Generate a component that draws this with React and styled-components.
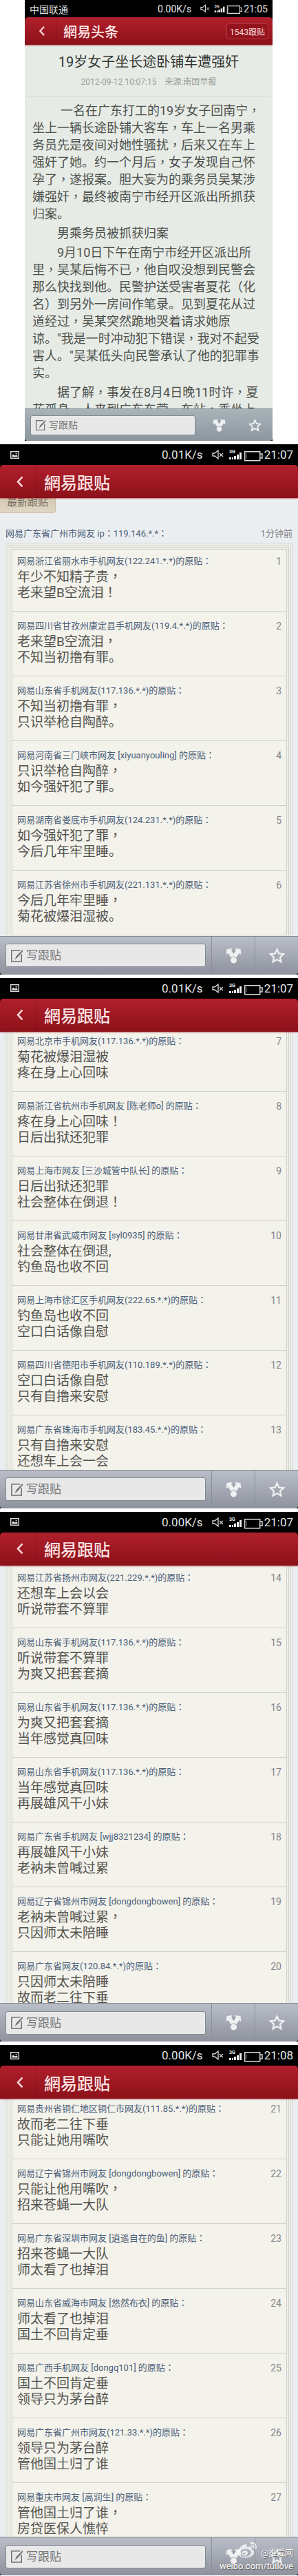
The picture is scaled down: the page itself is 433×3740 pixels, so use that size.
import React from "react";
import styled, { createGlobalStyle, ThemeProvider } from "styled-components";
import { FaWeibo } from "react-icons/fa";

const GlobalStyle = createGlobalStyle`
  * {
    box-sizing: border-box;
  }
  body {
    margin: 0;
    background: #fff;
    font-family: Roboto, "Noto Sans CJK SC", sans-serif;
  }
  h1, h2, p, ol {
    margin: 0;
    padding: 0;
    font-weight: 400;
  }
  button, input {
    font-family: inherit;
  }
`;

const regular = {
  status: 30,
  statusText: 17,
  icons: 74,
  header: 48,
  back: 54,
  logo: 24,
  footer: 56,
  tool: 63,
  field: 34,
  fieldText: 17,
  penIcon: 19,
  toolIcon: 23,
  line: "#8a8f9b",
  paper: "#ebeef1",
  bar: "linear-gradient(#b9bec8, #8e929c)",
};

const compact = {
  status: 25,
  statusText: 14,
  icons: 61,
  header: 40,
  back: 46,
  logo: 20,
  footer: 47,
  tool: 52,
  field: 29,
  fieldText: 14,
  penIcon: 16,
  toolIcon: 19,
  line: "transparent",
  paper: "#e7ebe6",
  bar: "linear-gradient(#a9b3ba, #8c969e)",
};

const Page = styled.main`
  display: flex;
  flex-direction: column;
  gap: 5px;
  position: relative;
`;
const Inset = styled.div`
  padding: 0 37px 0 36px;
`;
const Screen = styled.section`
  display: flex;
  flex-direction: column;
  aspect-ratio: 9 / 16;
  overflow: hidden;
  background: #000;
`;
const Status = styled.div`
  display: flex;
  align-items: center;
  flex: none;
  height: ${(p) => p.theme.status}px;
  padding: 0 7px;
  color: #e4e4e4;
  font-size: ${(p) => p.theme.statusText}px;
  .left {
    flex: 1;
    display: flex;
  }
  .picture {
    margin-left: 8px;
  }
  .icons {
    margin: 0 2px 0 13px;
  }
`;
const Header = styled.header`
  display: flex;
  align-items: center;
  flex: none;
  height: ${(p) => p.theme.header}px;
  border-radius: 5px 5px 0 0;
  background: linear-gradient(#b0202c, #8c1119);
  box-shadow: 0 1px 2px rgba(150, 20, 30, 0.6);
  position: relative;
  z-index: 1;
`;
const Back = styled.button`
  display: flex;
  align-items: center;
  justify-content: center;
  width: ${(p) => p.theme.back}px;
  height: 100%;
  padding: 0 0 0 4px;
  border: 0;
  border-right: 1px solid rgba(100, 5, 15, 0.3);
  background: none;
`;
const Logo = styled.h1`
  flex: 1;
  padding-left: 10px;
  color: #fbe3e3;
  font-size: ${(p) => p.theme.logo}px;
  font-weight: 500;
`;
const Badge = styled.button`
  height: 23px;
  margin-right: 6px;
  padding: 0 4px;
  border: 1px solid #b5333d;
  border-radius: 3px;
  background: #94141d;
  color: #f7dede;
  font-size: 12px;
  white-space: nowrap;
`;
const Body = styled.div`
  flex: 1;
  min-height: 0;
  overflow: hidden;
  background: ${(p) => p.theme.paper};
`;
/* how far the thread has been scrolled under the header */
const Scrolled = styled.div`
  margin-top: -${(p) => p.$by}px;
`;
const Footer = styled.footer`
  display: flex;
  align-items: center;
  flex: none;
  height: ${(p) => p.theme.footer}px;
  border-top: 1px solid #868b90;
  border-radius: 0 0 4px 4px;
  background: ${(p) => p.theme.bar};
`;
const Field = styled.label`
  display: flex;
  align-items: center;
  flex: 1;
  min-width: 0;
  gap: 4px;
  height: ${(p) => p.theme.field}px;
  margin: 0 8px;
  padding: 0 6px;
  border: 1px solid #858a92;
  border-radius: 3px;
  background: #e8e8e8;
  svg {
    flex: none;
  }
  input {
    flex: 1;
    min-width: 0;
    padding: 0;
    border: 0;
    outline: 0;
    background: none;
    font-size: ${(p) => p.theme.fieldText}px;
  }
  input::placeholder {
    color: #777;
    opacity: 1;
  }
`;
const Tool = styled.button`
  display: flex;
  align-items: center;
  justify-content: center;
  width: ${(p) => p.theme.tool}px;
  height: 100%;
  padding: 0;
  border: 0;
  border-left: 1px solid ${(p) => p.theme.line};
  background: none;
`;

const ArticleHead = styled.div`
  margin: 0 4px;
  padding: 11px 0;
  border-bottom: 1px solid #cfd3ce;
  text-align: center;
  h2 {
    color: #333733;
    font-size: 20px;
    line-height: 28px;
  }
  p {
    display: flex;
    justify-content: center;
    gap: 12px;
    margin-top: 6px;
    color: #999d98;
    font-size: 12px;
    line-height: 18px;
  }
`;
const Article = styled.article`
  padding: 8px 14px 0 11px;
  color: #4d514c;
  font-size: 18px;
  line-height: 25px;
  p {
    margin-bottom: 3px;
    text-indent: 36px;
  }
  p:first-child {
    text-indent: 41px;
  }
`;
/* the TC face sets these marks in the middle of their cell */
const Mark = styled.span`
  font-family: Roboto, "Noto Sans CJK TC", sans-serif;
`;

const Tab = styled.div`
  width: 81px;
  height: 32px;
  padding-left: 10px;
  border: 1px solid #c9bda6;
  border-width: 0 1px 1px 0;
  border-radius: 0 0 4px 0;
  background: linear-gradient(#cfc3ac, #e0d6c4);
  color: #7a6f60;
  font-size: 15px;
  line-height: 32px;
`;
const Poster = styled.div`
  display: flex;
  justify-content: space-between;
  margin: 21px 8px 13px;
  color: #4b6079;
  font-size: 13px;
  line-height: 18px;
  time {
    color: #7d8084;
  }
`;
const Thread = styled.ol`
  margin: 0 16px 0 17px;
  border: 1px solid #d0d1ca;
  border-width: ${(p) => (p.$top ? "1px" : "0")} 1px 0;
  background: #f3f2eb;
  box-shadow: 0 0 0 2px #f0f0ea, 0 0 0 3px #d0d1ca, 0 0 0 5px #f0f0ea,
    0 0 0 6px #d3d4ce, 0 0 0 8px #eeefea, 0 0 0 9px #d6d8d4;
  list-style: none;
`;
const Post = styled.li`
  padding: ${(p) => (p.$first ? 8 : 12)}px 7px 15px;
  border-bottom: 1px solid #d0d1ca;
  .meta {
    display: flex;
    justify-content: space-between;
    color: #4b6079;
    font-size: 13px;
    line-height: 18px;
    white-space: nowrap;
  }
  .floor {
    color: #85868a;
    font-size: 14px;
  }
  .text {
    margin-top: 2px;
    color: #53534f;
    font-size: 19px;
    line-height: 23px;
    white-space: pre-line;
  }
`;
const Watermark = styled.div`
  position: absolute;
  right: 7px;
  bottom: 5px;
  display: flex;
  flex-direction: column;
  align-items: flex-end;
  color: #fff;
  font-size: 13px;
  line-height: 17px;
  text-shadow: 1px 1px 1px #555;
  div {
    display: flex;
    align-items: center;
    gap: 6px;
    font-size: 12px;
  }
  svg {
    margin-top: -8px;
    opacity: 0.75;
  }
`;

const screens = [
  {
    speed: "0.01K/s",
    time: "21:07",
    scroll: 10,
    first: 1,
    posts: [
      ["网易浙江省丽水市手机网友(122.241.*.*)的原贴：", "年少不知精子贵，\n老来望B空流泪！"],
      ["网易四川省甘孜州康定县手机网友(119.4.*.*)的原贴：", "老来望B空流泪，\n不知当初撸有罪。"],
      ["网易山东省手机网友(117.136.*.*)的原贴：", "不知当初撸有罪，\n只识举枪自陶醉。"],
      ["网易河南省三门峡市网友 [xiyuanyouling] 的原贴：", "只识举枪自陶醉，\n如今强奸犯了罪。"],
      ["网易湖南省娄底市手机网友(124.231.*.*)的原贴：", "如今强奸犯了罪，\n今后几年牢里睡。"],
      ["网易江苏省徐州市手机网友(221.131.*.*)的原贴：", "今后几年牢里睡，\n菊花被爆泪湿被。"],
    ],
  },
  {
    speed: "0.01K/s",
    time: "21:07",
    scroll: 7,
    first: 7,
    posts: [
      ["网易北京市手机网友(117.136.*.*)的原贴：", "菊花被爆泪湿被\n疼在身上心回味"],
      ["网易浙江省杭州市手机网友 [陈老师o] 的原贴：", "疼在身上心回味！\n日后出狱还犯罪"],
      ["网易上海市网友 [三沙城管中队长] 的原贴：", "日后出狱还犯罪\n社会整体在倒退！"],
      ["网易甘肃省武威市网友 [syl0935] 的原贴：", "社会整体在倒退,\n钓鱼岛也收不回"],
      ["网易上海市徐汇区手机网友(222.65.*.*)的原贴：", "钓鱼岛也收不回\n空口白话像自慰"],
      ["网易四川省德阳市手机网友(110.189.*.*)的原贴：", "空口白话像自慰\n只有自撸来安慰"],
      ["网易广东省珠海市手机网友(183.45.*.*)的原贴：", "只有自撸来安慰\n还想车上会一会"],
    ],
  },
  {
    speed: "0.00K/s",
    time: "21:07",
    scroll: 3,
    first: 14,
    posts: [
      ["网易江苏省扬州市网友(221.229.*.*)的原贴：", "还想车上会以会\n听说带套不算罪"],
      ["网易山东省手机网友(117.136.*.*)的原贴：", "听说带套不算罪\n为爽又把套套摘"],
      ["网易山东省手机网友(117.136.*.*)的原贴：", "为爽又把套套摘\n当年感觉真回味"],
      ["网易山东省手机网友(117.136.*.*)的原贴：", "当年感觉真回味\n再展雄风干小妹"],
      ["网易广东省手机网友 [wjj8321234] 的原贴：", "再展雄风干小妹\n老衲未曾喊过累"],
      ["网易辽宁省锦州市网友 [dongdongbowen] 的原贴：", "老衲未曾喊过累，\n只因师太未陪睡"],
      ["网易广东省网友(120.84.*.*)的原贴：", "只因师太未陪睡\n故而老二往下垂"],
    ],
  },
  {
    speed: "0.00K/s",
    time: "21:08",
    scroll: 6,
    first: 21,
    posts: [
      ["网易贵州省铜仁地区铜仁市网友(111.85.*.*)的原贴：", "故而老二往下垂\n只能让她用嘴吹"],
      ["网易辽宁省锦州市网友 [dongdongbowen] 的原贴：", "只能让他用嘴吹，\n招来苍蝇一大队"],
      ["网易广东省深圳市网友 [逍遥自在的鱼] 的原贴：", "招来苍蝇一大队\n师太看了也掉泪"],
      ["网易山东省威海市网友 [悠然布衣] 的原贴：", "师太看了也掉泪\n国土不回肯定垂"],
      ["网易广西手机网友 [dongq101] 的原贴：", "国土不回肯定垂\n领导只为茅台醉"],
      ["网易广东省广州市网友(121.33.*.*)的原贴：", "领导只为茅台醉\n管他国土归了谁"],
      ["网易重庆市网友 [高润生] 的原贴：", "管他国土归了谁，\n房贷医保人憔悴"],
    ],
  },
];

const paragraphs = [
  "一名在广东打工的19岁女子回南宁，坐上一辆长途卧铺大客车，车上一名男乘务员先是夜间对她性骚扰，后来又在车上强奸了她。约一个月后，女子发现自己怀孕了，遂报案。胆大妄为的乘务员吴某涉嫌强奸，最终被南宁市经开区派出所抓获归案。",
  "男乘务员被抓获归案",
  '9月10日下午在南宁市经开区派出所里，吴某后悔不已，他自叹没想到民警会那么快找到他。民警护送受害者夏花（化名）到另外一房间作笔录。见到夏花从过道经过，吴某突然跪地哭着请求她原谅。"我是一时冲动犯下错误，我对不起受害人。"吴某低头向民警承认了他的犯罪事实。',
  "据了解，事发在8月4日晚11时许，夏花孤身一人来到广东东莞一车站，乘坐上",
];

const Marked = ({ children }) =>
  children
    .split(/([，：！])/)
    .map((part, i) => (i % 2 ? <Mark key={i}>{part}</Mark> : part));

const StatusIcons = ({ width }) => (
  <svg className="icons" width={width} viewBox="0 0 74 20" fill="none">
    <path d="M1 8h3l5-4v12l-5-4H1z" stroke="#ddd" strokeWidth="1.3" />
    <path d="M11 8l5 5M16 8l-5 5" stroke="#ddd" strokeWidth="1.2" />
    <text x="25" y="8" fontSize="7" fontWeight="700" fill="#eee">
      3G
    </text>
    <path
      d="M25 14h3v3h-3zM29 14h2v3h-2zM32 12h3v5h-3zM36 10h3v7h-3zM40 7h3v10h-3z"
      fill="#eee"
    />
    <path d="M47.7 5.7h22v13h-22zM70 9h3v6h-3" stroke="#ddd" strokeWidth="1.4" />
    <path d="M50 8v8" stroke="#777" />
  </svg>
);

const PictureIcon = () => (
  <svg className="picture" width="13" height="11" viewBox="0 0 13 11">
    <rect x="0.7" y="0.7" width="11.6" height="9.6" fill="none" stroke="#ddd" strokeWidth="1.4" />
    <path d="M2.5 8.5V6l2-1.5 2 2 2-1 2 1v2z" fill="#ddd" />
    <circle cx="8.5" cy="3.7" r="1" fill="#ddd" />
  </svg>
);

const PenIcon = ({ size }) => (
  <svg width={size} height={size} viewBox="0 0 19 21" fill="none" stroke="#6d6d6d">
    <path d="M17 8v12H1V2h14" strokeWidth="1.6" />
    <path d="M18.5 1.5L9 11l-2 5 4-3.5 7.5-9z" fill="#6d6d6d" strokeWidth="0.6" />
  </svg>
);

const ShareIcon = ({ size }) => (
  <svg width={size} height={size} viewBox="0 0 22 23" fill="#eef0f2">
    <path d="M1 2l8-1-1.5 3L11 8l3.5-4L13 1l8 1 1 8-3-2-4 6H7L3 8l-3 2z" />
    <path d="M9.5 5.5L11 4l1.5 1.5L11 9z" fill="#8b909a" />
    <circle cx="11" cy="18" r="5" stroke="#a0a5ae" />
  </svg>
);

const StarIcon = ({ size }) => (
  <svg width={size} height={size} viewBox="0 0 24 24" fill="none">
    <path
      d="M12 2.5l2.9 6.4 7 .8-5.2 4.7 1.4 6.9-6.1-3.5-6.1 3.5 1.4-6.9L2.1 9.7l7-.8z"
      stroke="#eef0f2"
      strokeWidth="2.4"
    />
  </svg>
);

const Phone = ({ theme, carrier, speed, time, title, badge, children }) => {
  return (
    <ThemeProvider theme={theme}>
      <Screen>
        <Status>
          <span className="left">{carrier || <PictureIcon />}</span>
          <span>{speed}</span>
          <StatusIcons width={theme.icons} />
          <span>{time}</span>
        </Status>
        <Header>
          <Back aria-label="返回">
            <svg width="10" height={theme.logo * 0.7} viewBox="0 0 10 16" fill="none">
              <path d="M8.5 1L2 8l6.5 7" stroke="#f6d2d2" strokeWidth="2.6" />
            </svg>
          </Back>
          <Logo>{title}</Logo>
          {badge && <Badge>{badge}</Badge>}
        </Header>
        <Body>{children}</Body>
        <Footer>
          <Field>
            <PenIcon size={theme.penIcon} />
            <input type="text" placeholder="写跟贴" aria-label="写跟贴" />
          </Field>
          <Tool aria-label="分享">
            <ShareIcon size={theme.toolIcon} />
          </Tool>
          <Tool aria-label="收藏">
            <StarIcon size={theme.toolIcon} />
          </Tool>
        </Footer>
      </Screen>
    </ThemeProvider>
  );
};

const App = () => {
  return (
    <Page>
      <GlobalStyle />
      <Inset>
        <Phone
          theme={compact}
          carrier="中国联通"
          speed="0.00K/s"
          time="21:05"
          title="網易头条"
          badge="1543跟贴"
        >
          <ArticleHead>
            <h2>19岁女子坐长途卧铺车遭强奸</h2>
            <p>
              <span>2012-09-12 10:07:15</span>
              <span>来源:南国早报</span>
            </p>
          </ArticleHead>
          <Article>
            {paragraphs.map((text, i) => (
              <p key={i}>
                <Marked>{text}</Marked>
              </p>
            ))}
          </Article>
        </Phone>
      </Inset>
      {screens.map((s) => (
        <Phone key={s.first} theme={regular} speed={s.speed} time={s.time} title="網易跟贴">
          <Scrolled $by={s.scroll}>
            {s.first === 1 && (
              <>
                <Tab>最新跟贴</Tab>
                <Poster>
                  <span>
                    <Marked>网易广东省广州市网友 ip：119.146.*.*：</Marked>
                  </span>
                  <time>1分钟前</time>
                </Poster>
              </>
            )}
            <Thread $top={s.first === 1}>
              {s.posts.map(([from, text], i) => (
                <Post key={i} $first={s.first + i === 1}>
                  <div className="meta">
                    <span>
                      <Marked>{from}</Marked>
                    </span>
                    <span className="floor">{s.first + i}</span>
                  </div>
                  <p className="text">
                    <Marked>{text}</Marked>
                  </p>
                </Post>
              ))}
            </Thread>
          </Scrolled>
        </Phone>
      ))}
      <Watermark>
        <div>
          <FaWeibo size={28} />
          @推爱网
        </div>
        weibo.com/tuilove
      </Watermark>
    </Page>
  );
};

export default App;
